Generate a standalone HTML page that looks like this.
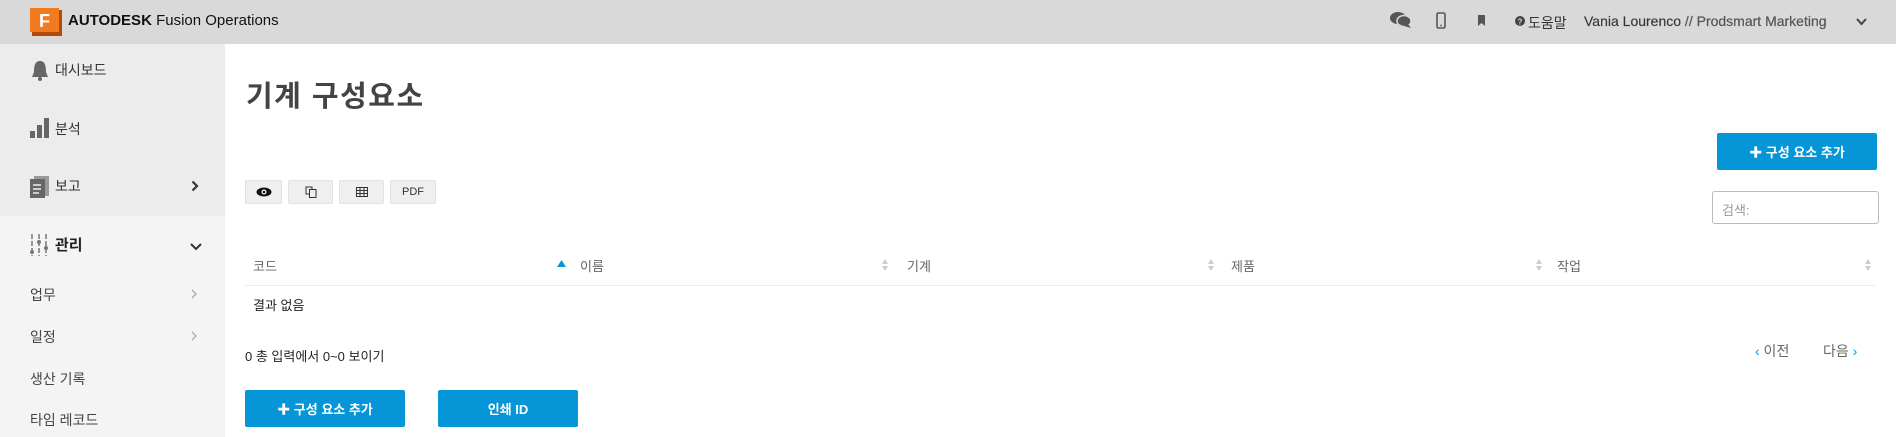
<!DOCTYPE html>
<html><head><meta charset="utf-8"><style>
*{box-sizing:border-box;margin:0;padding:0}
body{width:1896px;height:437px;overflow:hidden;background:#fff;font-family:"Liberation Sans","Noto Sans CJK KR",sans-serif;color:#333;position:relative}
.a{position:absolute;white-space:nowrap}
.top{position:absolute;left:0;top:0;width:1896px;height:44px;background:#d9d9d9}
.side1{position:absolute;left:0;top:44px;width:225px;height:172px;background:#ececec}
.side2{position:absolute;left:0;top:216px;width:225px;height:221px;background:#f4f4f4}
.si{font-size:14px;color:#333}
.tb{position:absolute;top:180px;height:24px;background:#efefef;border:1px solid #e2e2e2;border-radius:2px;font-size:11px;color:#333;display:flex;align-items:center;justify-content:center}
.btn{position:absolute;background:#0696d7;color:#fff;font-size:13px;font-weight:bold;display:flex;align-items:center;justify-content:center;border-radius:2px}
.th{font-size:13px;color:#666;top:256px}
.sort{position:absolute;top:258px;width:6px;height:14px}
</style></head><body>
<div class="top"></div>
<div class="a" style="left:30px;top:8px;width:32px;height:28px;">
<svg width="32" height="28"><rect x="2" y="2" width="30" height="26" fill="#b34a08"/><rect x="0" y="0" width="29" height="24" fill="#f37b1f"/><text x="9" y="19" font-family="Liberation Sans" font-weight="bold" font-size="18" fill="#fff">F</text></svg></div>
<div class="a" style="left:68px;top:12px;font-size:15px;color:#111"><b>AUTODESK</b> Fusion Operations</div>
<svg class="a" style="left:1390px;top:11px" width="22" height="18"><ellipse cx="8" cy="7" rx="8" ry="6" fill="#555"/><ellipse cx="14" cy="10" rx="7" ry="5.5" fill="#555" stroke="#d9d9d9" stroke-width="1.5"/><path d="M18 13 L21 17 L14 15Z" fill="#555"/></svg>
<svg class="a" style="left:1436px;top:12px" width="10" height="17"><rect x="1" y="1" width="8" height="15" rx="1.5" fill="none" stroke="#555" stroke-width="1.6"/><circle cx="5" cy="13.5" r="0.9" fill="#555"/></svg>
<svg class="a" style="left:1478px;top:15px" width="7" height="11"><path d="M0 0H7V11L3.5 8L0 11Z" fill="#555"/></svg>
<svg class="a" style="left:1515px;top:16px" width="10" height="10"><circle cx="5" cy="5" r="5" fill="#444"/><text x="2.5" y="8.5" font-size="8" font-weight="bold" fill="#d9d9d9" font-family="Liberation Sans">?</text></svg>
<div class="a" style="left:1528px;top:13px;font-size:14px;color:#333">도움말</div>
<div class="a" style="left:1584px;top:13px;font-size:14px;color:#555;-webkit-text-stroke:0.2px #555"><span style="color:#333">Vania Lourenco</span> // Prodsmart Marketing</div>
<svg class="a" style="left:1856px;top:18px" width="11" height="8"><path d="M1 1L5.5 6L10 1" stroke="#444" stroke-width="2" fill="none"/></svg>

<div class="side1"></div><div class="side2"></div>
<svg class="a" style="left:30px;top:60px" width="20" height="22"><path d="M10 1C5 1 4 6 4 12L2 17H18L16 12C16 6 15 1 10 1Z" fill="#666"/><circle cx="10" cy="19" r="2" fill="#666"/></svg>
<div class="a si" style="left:55px;top:60px">대시보드</div>
<svg class="a" style="left:30px;top:118px" width="22" height="20"><rect x="0" y="13" width="5" height="7" fill="#666"/><rect x="7" y="7" width="5" height="13" fill="#666"/><rect x="14" y="0" width="5" height="20" fill="#666"/></svg>
<div class="a si" style="left:55px;top:119px">분석</div>
<svg class="a" style="left:30px;top:176px" width="20" height="22"><rect x="4" y="0" width="15" height="20" fill="#999"/><rect x="0" y="3" width="15" height="19" fill="#666"/><path d="M3 9H11M3 13H11M3 17H9" stroke="#eee" stroke-width="1.5"/></svg>
<div class="a si" style="left:55px;top:176px">보고</div>
<svg class="a" style="left:191px;top:180px" width="8" height="12"><path d="M1.5 1.5L6 6L1.5 10.5" stroke="#333" stroke-width="2.2" fill="none"/></svg>
<svg class="a" style="left:30px;top:234px" width="18" height="22"><path d="M2 0V22M9 0V22M16 0V22" stroke="#777" stroke-width="1.5" stroke-dasharray="5 2"/><circle cx="2" cy="18" r="2" fill="#777"/><circle cx="9" cy="8" r="2" fill="#777"/><circle cx="16" cy="14" r="2" fill="#777"/></svg>
<div class="a" style="left:55px;top:234px;font-size:15px;color:#222;font-weight:bold">관리</div>
<svg class="a" style="left:190px;top:243px" width="12" height="8"><path d="M1 1L6 6L11 1" stroke="#333" stroke-width="2" fill="none"/></svg>
<div class="a si" style="left:30px;top:285px;color:#444">업무</div>
<svg class="a" style="left:191px;top:289px" width="6" height="10"><path d="M1 1L5 5L1 9" stroke="#aaa" stroke-width="1.3" fill="none"/></svg>
<div class="a si" style="left:30px;top:327px;color:#444">일정</div>
<svg class="a" style="left:191px;top:331px" width="6" height="10"><path d="M1 1L5 5L1 9" stroke="#aaa" stroke-width="1.3" fill="none"/></svg>
<div class="a si" style="left:30px;top:369px;color:#444">생산 기록</div>
<div class="a si" style="left:30px;top:410px;color:#444">타임 레코드</div>

<div class="a" style="left:246px;top:73px;font-size:29px;font-weight:bold;color:#444;letter-spacing:1.5px">기계 구성요소</div>
<div class="btn" style="left:1717px;top:133px;width:160px;height:37px">✚ 구성 요소 추가</div>
<div class="a" style="left:1712px;top:191px;width:167px;height:33px;border:1px solid #bbb;border-radius:3px;font-size:13px;color:#999;padding:8px 9px">검색:</div>

<div class="tb" style="left:245px;width:37px"><svg width="16" height="10"><ellipse cx="8" cy="5" rx="7.5" ry="4.5" fill="#111"/><circle cx="8" cy="5" r="2.5" fill="#fff"/><circle cx="8" cy="5" r="1.3" fill="#111"/></svg></div>
<div class="tb" style="left:288px;width:45px"><svg width="12" height="12"><rect x="1" y="1" width="6" height="7" fill="none" stroke="#333"/><rect x="4.5" y="3.5" width="6.5" height="8" fill="#efefef" stroke="#333"/></svg></div>
<div class="tb" style="left:339px;width:45px"><svg width="12" height="10"><rect x="0.5" y="0.5" width="11" height="9" fill="none" stroke="#333"/><path d="M0 3.5H12M0 6.5H12M4 0V10M8 0V10" stroke="#333"/></svg></div>
<div class="tb" style="left:390px;width:46px">PDF</div>

<div class="a th" style="left:253px">코드</div>
<svg class="a" style="left:557px;top:260px" width="9" height="8"><path d="M0 7L4.5 0L9 7Z" fill="#0696d7"/></svg>
<div class="a th" style="left:580px">이름</div>
<div class="a th" style="left:907px">기계</div>
<div class="a th" style="left:1231px">제품</div>
<div class="a th" style="left:1557px">작업</div>
<svg class="sort" style="left:882px"><path d="M0 6L3 1L6 6ZM0 8L3 13L6 8Z" fill="#ccc"/></svg>
<svg class="sort" style="left:1208px"><path d="M0 6L3 1L6 6ZM0 8L3 13L6 8Z" fill="#ccc"/></svg>
<svg class="sort" style="left:1536px"><path d="M0 6L3 1L6 6ZM0 8L3 13L6 8Z" fill="#ccc"/></svg>
<svg class="sort" style="left:1865px"><path d="M0 6L3 1L6 6ZM0 8L3 13L6 8Z" fill="#ccc"/></svg>
<div class="a" style="left:245px;top:285px;width:1630px;height:1px;background:#eee"></div>
<div class="a" style="left:253px;top:295px;font-size:13px;color:#222">결과 없음</div>
<div class="a" style="left:245px;top:346px;font-size:13px;color:#222">0 총 입력에서 0~0 보이기</div>
<div class="a" style="left:1755px;top:341px;font-size:14px;color:#666"><span style="color:#0696d7">‹</span> 이전</div>
<div class="a" style="left:1823px;top:341px;font-size:14px;color:#666">다음 <span style="color:#0696d7">›</span></div>
<div class="btn" style="left:245px;top:390px;width:160px;height:37px">✚ 구성 요소 추가</div>
<div class="btn" style="left:438px;top:390px;width:140px;height:37px">인쇄 ID</div>
</body></html>
